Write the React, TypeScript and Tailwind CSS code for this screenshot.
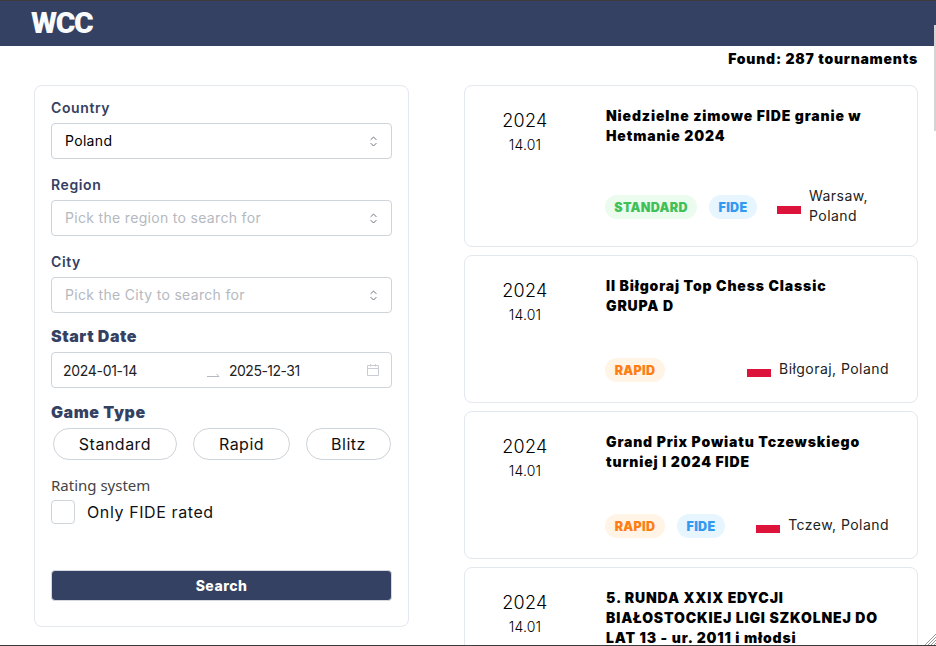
const navy = 'bg-[#344162]'

function Chevrons() {
  return (
    <svg width="15" height="15" viewBox="0 0 15 15" fill="none" className="shrink-0">
      <path d="M4.9 5.6 7.5 3l2.6 2.6M4.9 9.4 7.5 12l2.6-2.6" stroke="#6b7280" strokeWidth="1" strokeLinecap="round" strokeLinejoin="round" />
    </svg>
  )
}

function Select({ label, value, placeholder }: { label: string; value?: string; placeholder?: string }) {
  return (
    <div className="flex flex-col">
      <label className="h-[20px] leading-[20px] text-[14px] tracking-[0.6px] font-semibold text-[#344162]">{label}</label>
      <div className="mt-[5px] h-[36px] flex items-center justify-between pl-[13px] pr-[10px] border border-[#ced4da] rounded-[4px] text-[14px] tracking-[0.32px]">
        <span className={`-mt-[1px] ${value ? 'text-black' : 'text-[#b4b9c0]'}`}>{value ?? placeholder}</span>
        <Chevrons />
      </div>
    </div>
  )
}

function Chip({ label, className }: { label: string; className: string }) {
  return (
    <div className={`h-[32px] flex items-center justify-center rounded-full border border-[#ced4da] text-[16px] tracking-[0.5px] text-[#111] ${className}`}>
      {label}
    </div>
  )
}

function Filters() {
  return (
    <aside className="w-[375px] h-[542px] shrink-0 border border-[#e3e7ee] rounded-[8px] pt-[12px] px-[16px] flex flex-col">
      <div className="flex flex-col gap-[16px]">
        <Select label="Country" value="Poland" />
        <Select label="Region" placeholder="Pick the region to search for" />
        <Select label="City" placeholder="Pick the City to search for" />
      </div>
      <h3 className="mt-[11px] h-[24px] leading-[24px] text-[16px] tracking-[0.55px] font-black text-[#344162]">Start Date</h3>
      <div className="mt-[4px] h-[36px] flex items-center border border-[#ced4da] rounded-[4px] text-[14px] text-[#222] pl-[11px] pr-[11px]">
        <span className="w-[143px] tracking-[-0.3px]">2024-01-14</span>
        <svg width="14" height="8" viewBox="0 0 14 8" fill="none" className="mt-[8px] shrink-0">
          <path d="M1 6.5h12L10.5 4" stroke="#b4b9c0" strokeWidth="1" />
        </svg>
        <span className="ml-[9px] flex-1 tracking-[-0.5px]">2025-12-31</span>
        <svg width="14" height="14" viewBox="0 0 14 14" fill="none" className="shrink-0">
          <path d="M1.5 2.5h11v10h-11zM1.5 5.5h11M4.5 1v2.5M9.5 1v2.5" stroke="#c9cdd3" strokeWidth="1" />
        </svg>
      </div>
      <h3 className="mt-[12px] h-[24px] leading-[24px] text-[16px] tracking-[0.55px] font-black text-[#344162]">Game Type</h3>
      <div className="mt-[4px] pl-[2px] flex">
        <Chip label="Standard" className="w-[124px]" />
        <Chip label="Rapid" className="ml-[16px] w-[97px]" />
        <Chip label="Blitz" className="ml-[16px] w-[85px]" />
      </div>
      <div className="mt-[15px] h-[20px] leading-[20px] text-[15px] text-[#444] font-['Noto_Sans',sans-serif]">Rating system</div>
      <div className="mt-[5px] flex items-center">
        <div className="w-[24px] h-[24px] border border-[#ced4da] rounded-[4px]" />
        <span className="ml-[12px] text-[16px] tracking-[0.6px] text-[#111]">Only FIDE rated</span>
      </div>
      <button className={`mt-[46px] h-[31px] ${navy} rounded-[4px] border border-[#d5d8de] text-white text-[14px] font-extrabold tracking-[0.5px]`}>Search</button>
    </aside>
  )
}

const tagStyles = {
  STANDARD: 'bg-[#ebfbee] text-[#40c057] w-[92px]',
  RAPID: 'bg-[#fff4e6] text-[#fd7e14] w-[60px]',
  FIDE: 'bg-[#e7f5ff] text-[#339af0] w-[48px]',
}

function Tag({ name }: { name: keyof typeof tagStyles }) {
  return (
    <span className={`h-[24px] pt-[2px] flex items-center justify-center rounded-full text-[12.5px] font-black tracking-[0.3px] ${tagStyles[name]}`}>
      {name}
    </span>
  )
}

type Tournament = {
  title: string[]
  tags: (keyof typeof tagStyles)[]
  place: string
  narrow?: boolean
}

function Card({ title, tags, place, narrow }: Tournament) {
  return (
    <article className="border border-[#e3e7ee] rounded-[8px] pt-[20px] pb-[20px] pl-[15px] pr-[28px] flex shrink-0">
      <div className="w-[90px] shrink-0 text-center text-black">
        <div className="mt-[4px] h-[22px] leading-[22px] text-[18px] tracking-[0.3px] font-light">2024</div>
        <div className="mt-[3px] h-[20px] leading-[20px] text-[14px] tracking-[0.2px] font-light">14.01</div>
      </div>
      <div className="ml-[36px] flex-1 min-w-0">
        <div className="h-[80px] text-[14px] leading-[20px] font-black text-black tracking-[0.85px]">
          {title.map(line => <div key={line} className="whitespace-nowrap">{line}</div>)}
        </div>
        <div className={`flex items-center justify-between ${narrow ? 'h-[40px]' : 'h-[26px]'}`}>
          <div className="pt-[2px] flex gap-[12px] -ml-[1px]">
            {tags.map(t => <Tag key={t} name={t} />)}
          </div>
          <div className="flex items-center gap-[8px]">
            <div className="w-[24px] h-[16px] flex flex-col shrink-0">
              <div className="h-[8px] bg-white" />
              <div className="h-[8px] bg-[#dc143c]" />
            </div>
            <span className={`text-[14px] leading-[20px] tracking-[0.45px] text-[#222] ${narrow ? 'w-[80px]' : ''}`}>{place}</span>
          </div>
        </div>
      </div>
    </article>
  )
}

const tournaments: Tournament[] = [
  { title: ['Niedzielne zimowe FIDE granie w', 'Hetmanie 2024'], tags: ['STANDARD', 'FIDE'], place: 'Warsaw, Poland', narrow: true },
  { title: ['II Biłgoraj Top Chess Classic', 'GRUPA D'], tags: ['RAPID'], place: 'Biłgoraj, Poland' },
  { title: ['Grand Prix Powiatu Tczewskiego', 'turniej I 2024 FIDE'], tags: ['RAPID', 'FIDE'], place: 'Tczew, Poland' },
  { title: ['5. RUNDA XXIX EDYCJI', 'BIAŁOSTOCKIEJ LIGI SZKOLNEJ DO', 'LAT 13 - ur. 2011 i młodsi'], tags: ['RAPID'], place: 'Białystok, Poland' },
]

export default function App() {
  return (
    <div className="relative h-[646px] overflow-hidden bg-white font-['Inter',sans-serif] border-t border-b border-[#3c3c3c]">
      <header className={`h-[45px] ${navy} pl-[31px] flex items-center`}>
        <span className="font-['Roboto',sans-serif] text-[30px] leading-none font-black text-[#f8fafc] tracking-[-1.4px] -mt-[1px]">WCC</span>
      </header>
      <div className="h-[39px] pr-[18px] pt-[3px] flex justify-end">
        <span className="h-[20px] leading-[20px] text-[14px] font-black text-black tracking-[0.77px]">Found: 287 tournaments</span>
      </div>
      <main className="flex pl-[34px] gap-[55px]">
        <Filters />
        <section className="w-[454px] flex flex-col gap-[8px]">
          {tournaments.map(t => <Card key={t.place} {...t} />)}
        </section>
      </main>
      {/* window chrome that sits over the page */}
      <div className="absolute top-[24px] right-0 w-[2px] h-[106px] bg-[#d4d4d4]" />
      <svg width="12" height="12" viewBox="0 0 12 12" className="absolute right-0 bottom-0">
        <path d="M12 1 1 12M12 4 4 12M12 7 7 12M12 10 10 12" stroke="#9a9a9a" strokeWidth="1" />
      </svg>
    </div>
  )
}
